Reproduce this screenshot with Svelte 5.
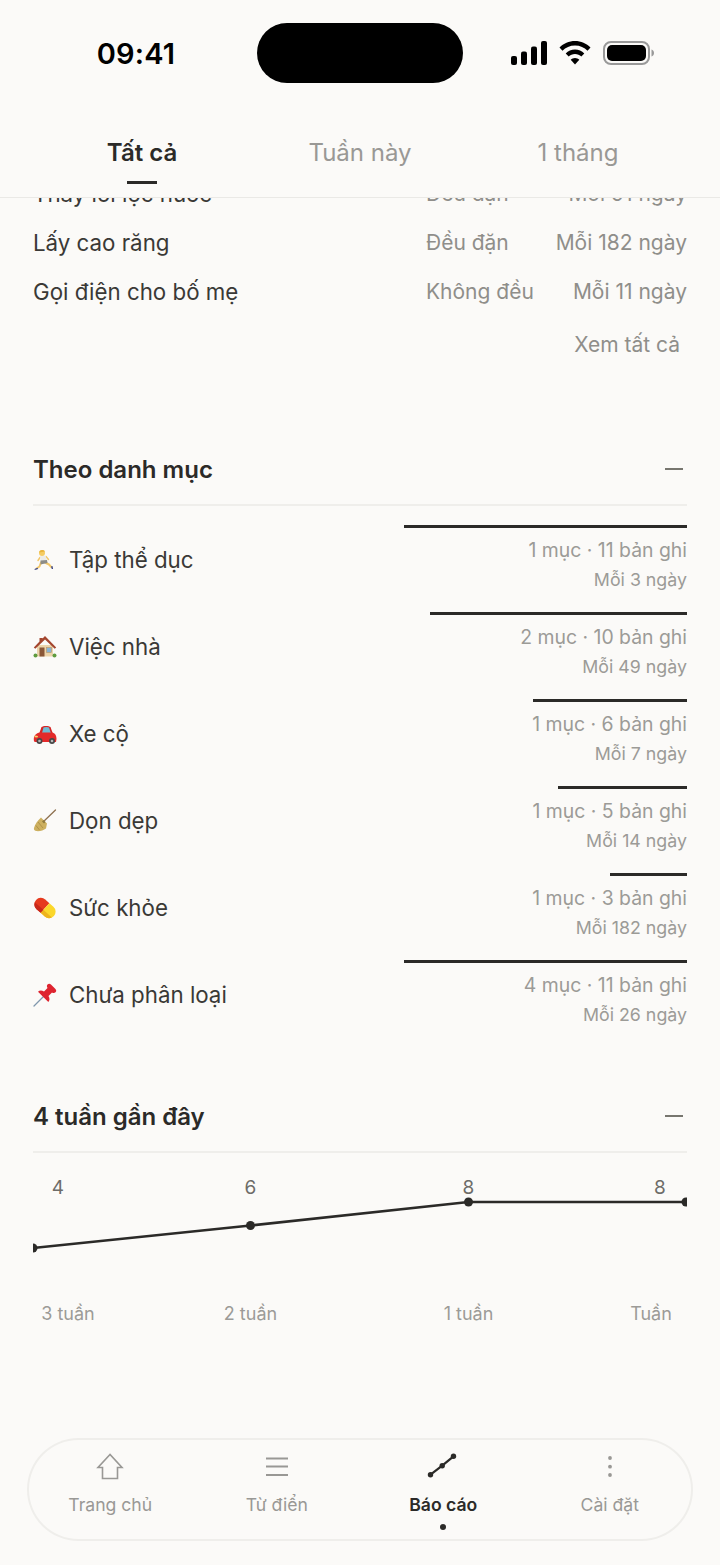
<script>
  const tabs = ["Tất cả", "Tuần này", "1 tháng"];

  const habits = [
    { name: "Thay lõi lọc nước", kind: "Đều đặn", every: "Mỗi 91 ngày" },
    { name: "Lấy cao răng", kind: "Đều đặn", every: "Mỗi 182 ngày" },
    { name: "Gọi điện cho bố mẹ", kind: "Không đều", every: "Mỗi 11 ngày" },
  ];

  const categories = [
    { icon: "run", name: "Tập thể dục", items: 1, logs: 11, every: 3 },
    { icon: "house", name: "Việc nhà", items: 2, logs: 10, every: 49 },
    { icon: "car", name: "Xe cộ", items: 1, logs: 6, every: 7 },
    { icon: "broom", name: "Dọn dẹp", items: 1, logs: 5, every: 14 },
    { icon: "pill", name: "Sức khỏe", items: 1, logs: 3, every: 182 },
    { icon: "pin", name: "Chưa phân loại", items: 4, logs: 11, every: 26 },
  ];
  const maxLogs = 11;

  const weeks = [
    { x: 0, y: 77, value: 4, valueX: 25, label: "3 tuần", labelX: 35 },
    { x: 217.5, y: 54.5, value: 6, valueX: 217.5, label: "2 tuần", labelX: 217.5 },
    { x: 435.5, y: 31, value: 8, valueX: 435.5, label: "1 tuần", labelX: 435.5 },
    { x: 653, y: 31, value: 8, valueX: 627, label: "Tuần", labelX: 618 },
  ];
  const points = weeks.map((w) => `${w.x},${w.y}`).join(" ");

  const navItems = [
    { icon: "home", label: "Trang chủ" },
    { icon: "list", label: "Từ điển" },
    { icon: "chart", label: "Báo cáo", active: true },
    { icon: "more", label: "Cài đặt" },
  ];
</script>

{#snippet emoji(name)}
  <svg class="emoji" viewBox="0 0 24 24" aria-hidden="true">
    {#if name === "run"}
      <path d="M8 14.500L6.500 18.500 3.500 20.500" fill="none" stroke="#f2c76a" stroke-width="2" stroke-linecap="round" stroke-linejoin="round" />
      <path d="M12 14.500l4 2 2.500 2.800" fill="none" stroke="#f2c76a" stroke-width="2" stroke-linecap="round" stroke-linejoin="round" />
      <path d="M7 9.500L5 12.500M13 8.500l2.500 3" fill="none" stroke="#f2c76a" stroke-width="1.500" stroke-linecap="round" />
      <path d="M7 8l5.500-.5L14 12.500 7.500 13z" fill="#ecebe6" />
      <path d="M7.500 12.500l6.500-.5.500 3-7 1.500z" fill="#8c8c88" />
      <circle cx="9" cy="5" r="3" fill="#f5cc62" />
      <path d="M6 4.500C6.500 2 10 1 12 3.500L9 4z" fill="#e8b33c" />
      <path d="M1.500 21l3-1.200.6 1.300-3.300 1zM18 18.500l1.500-.6.600 3-1.300.2z" fill="#39478f" />
    {:else if name === "house"}
      <rect x="4" y="10" width="16" height="11.500" fill="#ecd4ab" />
      <path d="M.8 12.500L6.500 6.500V3h3v.5L12 1l11.200 11.500-1.500 1.200L12 4.500 2.300 13.700z" fill="#a3452e" />
      <rect x="6.500" y="12.500" width="5" height="9" fill="#8a5738" />
      <rect x="13.500" y="12.500" width="5" height="5" fill="#86b3d6" stroke="#b99465" stroke-width=".6" />
      <circle cx="2.500" cy="20.500" r="2" fill="#5f9c3f" />
      <circle cx="21.500" cy="20.500" r="2" fill="#5f9c3f" />
    {:else if name === "car"}
      <path d="M8.500 5C10 3.500 16 3.500 17.500 5L20 12H6z" fill="#d62424" />
      <path d="M10.500 5.500c1.500-.7 4.500-.7 5.500 0l1.800 5.500H9z" fill="#6fbbd3" />
      <path d="M.8 17.500C.8 13.500 3 11 7 10.500h12c3 .3 4.500 3 4.500 6.500l-.5 3H2c-.8 0-1.200-1-1.200-2.500z" fill="#e32a2a" />
      <path d="M2 13.500l3 .5-.5 1.500-3-.3z" fill="#f6d76b" />
      <circle cx="6.500" cy="19" r="3" fill="#474747" />
      <circle cx="19" cy="19" r="3" fill="#474747" />
      <circle cx="6.500" cy="19" r="1.300" fill="#b8b8b8" />
      <circle cx="19" cy="19" r="1.300" fill="#b8b8b8" />
    {:else if name === "broom"}
      <path d="M9 14L22.500 1" stroke="#8e7150" stroke-width="1.300" stroke-linecap="round" />
      <path d="M8 8.500l6 6-1 5c-2.500 2-6.500 3-10 2.500-1.500-.3-2.500-1.500-2-3 1-3.500 3.500-7.500 7-10.500z" fill="#cdb060" />
      <path d="M10.500 11l2 2-1.500 1.500-2-2z" fill="#8f7a3c" />
      <path d="M5 13l5 6M3 16.500l3.500 4.500" stroke="#a88b43" stroke-width=".8" />
    {:else if name === "pill"}
      <g transform="rotate(42 12 12)">
        <path d="M12 5.500H6.500a6.500 6.500 0 0 0 0 13H12z" fill="#e63a1e" />
        <path d="M12 5.500h5.500a6.500 6.500 0 0 1 0 13H12z" fill="#fbd72b" />
        <path d="M12 18.500h5.500a6.500 6.500 0 0 0 6-4H12z" fill="#eeb31d" />
        <path d="M12 18.500H6.500a6.500 6.500 0 0 1-6-4H12z" fill="#c9281a" />
      </g>
    {:else if name === "pin"}
      <path d="M10 14L1 23" stroke="#7f97ad" stroke-width="1.300" stroke-linecap="round" />
      <path d="M14.500 1.500c1.200-1.200 2.500-1 3.700.2l4 4c1.200 1.200 1.400 2.500.3 3.500-1 1-2.300.9-3.500.2L15.500 13c1.500 2.500 1.200 4.500-.2 6L5 8.700c1.500-1.400 3.500-1.700 6-.2l3.500-3.500c-.7-1.200-.9-2.500 0-3.500z" fill="#de2430" />
    {/if}
  </svg>
{/snippet}

{#snippet navIcon(name)}
  <svg class="nav-icon" viewBox="0 0 32 32" aria-hidden="true">
    {#if name === "home"}
      <path d="M16 3.500L4 16.500h4.500V27.500h15V16.500H28z" fill="none" stroke="currentColor" stroke-width="1.600" />
    {:else if name === "list"}
      <path d="M5 7.500h22M5 15.500h22M5 24h22" stroke="currentColor" stroke-width="2" />
    {:else if name === "chart"}
      <path d="M3.500 23.700L15.200 14.700 26.500 5.300" fill="none" stroke="currentColor" stroke-width="2.200" />
      <circle cx="3.500" cy="23.700" r="2.700" fill="currentColor" />
      <circle cx="15.200" cy="14.700" r="2.700" fill="currentColor" />
      <circle cx="26.500" cy="5.300" r="2.700" fill="currentColor" />
    {:else if name === "more"}
      <circle cx="16" cy="7" r="1.900" fill="currentColor" />
      <circle cx="16" cy="15.700" r="1.900" fill="currentColor" />
      <circle cx="16" cy="24" r="1.900" fill="currentColor" />
    {/if}
  </svg>
{/snippet}

<div class="page">
  <header>
    <div class="status">
      <span class="time">09:41</span>
      <div class="island"></div>
      <div class="status-icons">
        <svg width="36" height="24" viewBox="0 0 36 24" aria-hidden="true">
          <rect x="0" y="15" width="6" height="9" rx="2" />
          <rect x="10" y="10.500" width="6" height="13.500" rx="2" />
          <rect x="20" y="5.500" width="6" height="18.500" rx="2" />
          <rect x="30" y="0" width="6" height="24" rx="2" />
        </svg>
        <svg width="32" height="24" viewBox="0 0 32 24" aria-hidden="true">
          <path d="M16 0C10 0 4.500 2.500.5 6.500l3 3.200C6.600 6.500 11 4.500 16 4.500s9.400 2 12.500 5.200l3-3.200C27.500 2.500 22 0 16 0z" />
          <path d="M16 8.500c-3.600 0-6.900 1.500-9.300 3.900l3 3.200c1.600-1.600 3.800-2.600 6.300-2.600s4.700 1 6.300 2.600l3-3.200c-2.400-2.400-5.700-3.900-9.300-3.900z" />
          <path d="M16 17c-1.700 0-3.200.7-4.300 1.800L16 23.500l4.300-4.700C19.200 17.700 17.700 17 16 17z" />
        </svg>
        <svg width="51" height="24" viewBox="0 0 51 24" aria-hidden="true">
          <rect x="1" y="1" width="45" height="22" rx="7" fill="none" stroke="#999" stroke-width="2" />
          <rect x="4" y="4" width="39" height="16" rx="5" />
          <path d="M48.500 8.500c1.500.4 2.500 1.800 2.500 3.500s-1 3.100-2.500 3.500z" fill="#999" />
        </svg>
      </div>
    </div>
    <nav class="tabs">
      {#each tabs as tab, i}
        <div class="tab" class:active={i === 0}>{tab}</div>
      {/each}
    </nav>
  </header>

  <main>
    <section class="habits">
      {#each habits as h}
        <div class="habit">
          <span class="habit-name">{h.name}</span>
          <span class="habit-kind">{h.kind}</span>
          <span class="habit-every">{h.every}</span>
        </div>
      {/each}
      <div class="see-all">Xem tất cả</div>
    </section>

    <section class="by-category">
      <div class="section-head">
        <h2>Theo danh mục</h2>
        <span class="collapse"></span>
      </div>
      <div class="category-list">
        {#each categories as c}
          <div class="category">
            <div class="category-name">
              {@render emoji(c.icon)}
              <span>{c.name}</span>
            </div>
            <div class="category-stats">
              <div class="bar" style="width: {(c.logs / maxLogs) * 100}%"></div>
              <div class="stat">{c.items} mục · {c.logs} bản ghi</div>
              <div class="stat">Mỗi {c.every} ngày</div>
            </div>
          </div>
        {/each}
      </div>
    </section>

    <section class="recent">
      <div class="section-head">
        <h2>4 tuần gần đây</h2>
        <span class="collapse"></span>
      </div>
      <svg class="chart" viewBox="0 0 654 170" width="654" height="170" aria-hidden="true">
        <polyline {points} fill="none" stroke="#2b2a28" stroke-width="2.500" />
        {#each weeks as w}
          <circle cx={w.x} cy={w.y} r="4.500" fill="#2b2a28" />
          <text class="chart-value" x={w.valueX} y="23" text-anchor="middle">{w.value}</text>
          <text class="chart-label" x={w.labelX} y="149" text-anchor="middle">{w.label}</text>
        {/each}
      </svg>
    </section>
  </main>

  <nav class="bottom-nav">
    {#each navItems as item}
      <div class="nav-item" class:active={item.active}>
        {@render navIcon(item.icon)}
        <span class="nav-label">{item.label}</span>
        {#if item.active}<span class="nav-dot"></span>{/if}
      </div>
    {/each}
  </nav>
</div>

<style>
  :global(body) {
    margin: 0;
    background: #fbfaf8;
  }

  .page {
    position: relative;
    width: 720px;
    height: 1565px;
    overflow: hidden;
    display: flex;
    flex-direction: column;
    background: #fbfaf8;
    color: #2b2a28;
    font-family: Inter, "Liberation Sans", sans-serif;
  }

  header {
    height: 197px;
    flex: none;
    border-bottom: 1px solid #eae9e6;
    background: #fbfaf8;
    position: relative;
    z-index: 1;
  }

  .status {
    display: flex;
    align-items: center;
    height: 60px;
    padding-top: 23px;
  }

  .time {
    width: 257px;
    padding-left: 15px;
    box-sizing: border-box;
    text-align: center;
    font-size: 29px;
    font-weight: 600;
    color: #000;
    letter-spacing: 0.2px;
  }

  .island {
    width: 206px;
    height: 60px;
    border-radius: 30px;
    background: #000;
  }

  .status-icons {
    display: flex;
    align-items: center;
    gap: 12px;
    margin-left: 48px;
    margin-top: -1px;
  }

  .status-icons svg {
    display: block;
  }

  .tabs {
    display: grid;
    grid-template-columns: repeat(3, 218px);
    padding: 41px 0 0 33px;
  }

  .tab {
    position: relative;
    height: 60px;
    line-height: 58px;
    text-align: center;
    font-size: 24px;
    color: #999895;
  }

  .tab.active {
    color: #2b2a28;
    font-weight: 600;
  }

  .tab.active::after {
    content: "";
    position: absolute;
    left: 50%;
    bottom: 0;
    width: 30px;
    height: 3px;
    margin-left: -15px;
    background: #2b2a28;
  }

  main {
    flex: 1;
    min-height: 0;
    overflow: hidden;
    padding: 0 33px;
  }

  .habits {
    margin-top: -29px;
  }

  .habit {
    display: grid;
    grid-template-columns: 393px 1fr auto;
    align-items: center;
    height: 49px;
    font-size: 22.3px;
  }

  .habit-name {
    color: #3a3936;
  }

  .habit-kind,
  .habit-every {
    font-size: 21px;
    color: #8f8e8a;
  }

  .see-all {
    margin-top: 4px;
    padding-right: 7px;
    height: 50px;
    line-height: 50px;
    text-align: right;
    font-size: 21px;
    color: #8f8e8a;
  }

  .by-category {
    margin-top: 64px;
  }

  .section-head {
    display: flex;
    align-items: center;
    justify-content: space-between;
    height: 72px;
    border-bottom: 2px solid #efeeeb;
    box-sizing: border-box;
  }

  h2 {
    margin: 0;
    font-size: 24px;
    font-weight: 600;
  }

  .collapse {
    width: 18px;
    height: 2px;
    margin-right: 4px;
    background: #77766f;
  }

  .category-list {
    padding-top: 10px;
  }

  .category {
    display: flex;
    align-items: center;
    justify-content: space-between;
    height: 87px;
  }

  .category-name {
    display: flex;
    align-items: center;
    gap: 12px;
    font-size: 22.3px;
    color: #3a3936;
  }

  .emoji {
    width: 24px;
    height: 24px;
    display: block;
  }

  .category-stats {
    width: 283px;
    margin-top: 1px;
    display: flex;
    flex-direction: column;
    align-items: flex-end;
  }

  .bar {
    height: 3px;
    margin-bottom: 7px;
    background: #2b2a28;
  }

  .stat {
    height: 30px;
    line-height: 30px;
    font-size: 19.4px;
    color: #9c9b97;
    white-space: nowrap;
  }

  .stat + .stat {
    font-size: 17.8px;
  }

  .recent {
    margin-top: 43px;
  }

  .chart {
    display: block;
    overflow: hidden;
    margin-top: 18px;
  }

  .chart-value {
    font-size: 19px;
    fill: #6d6c68;
  }

  .chart-label {
    font-size: 18px;
    fill: #9c9b97;
  }

  .bottom-nav {
    position: absolute;
    left: 27px;
    top: 1438px;
    width: 666px;
    height: 103px;
    display: grid;
    grid-template-columns: repeat(4, 1fr);
    box-shadow: inset 0 0 0 2px #efeeeb;
    border-radius: 52px;
    background: #fbfaf8;
  }

  .nav-item {
    position: relative;
    display: flex;
    flex-direction: column;
    align-items: center;
    padding-top: 13px;
    color: #999895;
  }

  .nav-item.active {
    color: #2b2a28;
  }

  .nav-icon {
    width: 32px;
    height: 32px;
    display: block;
  }

  .nav-label {
    margin-top: 9px;
    font-size: 17.6px;
    line-height: 26px;
  }

  .nav-item.active .nav-label {
    font-weight: 600;
  }

  .nav-dot {
    position: absolute;
    top: 86px;
    left: 50%;
    width: 6px;
    height: 6px;
    margin-left: -3px;
    border-radius: 50%;
    background: #2b2a28;
  }
</style>
